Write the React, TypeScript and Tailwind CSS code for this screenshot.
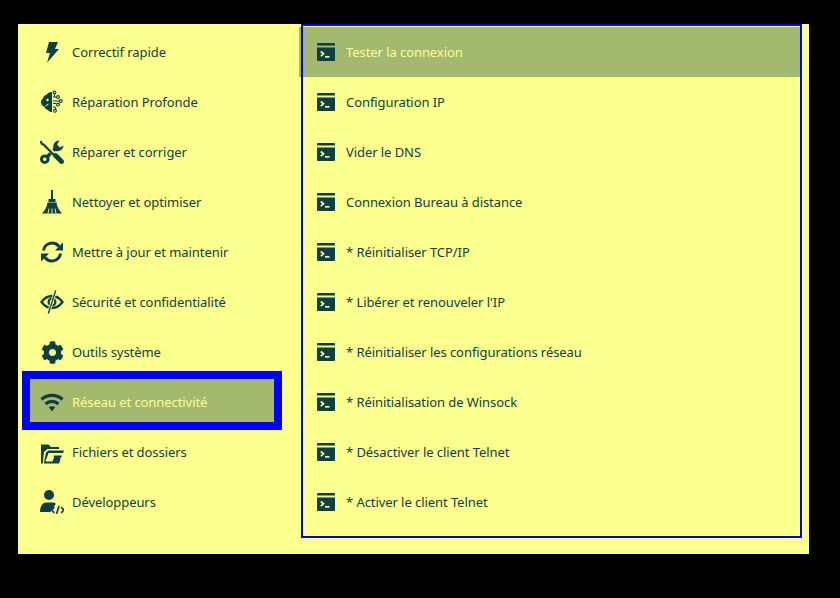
import type { ReactNode } from "react";
import { FaCog } from "react-icons/fa";

const BG = "#fbff8e";

function BoltIcon() {
  return (
    <svg width="24" height="24" viewBox="0 0 24 24" fill="currentColor">
      <path d="M9 2h9l-3 7h4L7 22.800 10 13H6z" />
    </svg>
  );
}

function BrainIcon() {
  return (
    <svg width="24" height="24" viewBox="0 0 24 24" fill="currentColor">
      <path d="M12 2v20c-1.900 0-3.300-.7-3.900-2.100-1.900 0-3.200-1.200-3.300-2.900C2.500 16.200 1 14.500 1 12.200c0-1.800.8-3.200 2.200-4 .1-1.800 1.400-3.200 3.200-3.300C7.200 3 9.500 2 12 2z" />
      <circle cx="7.500" cy="10" r="1.200" fill={BG} />
      <path d="M5.500 16l3-2" stroke={BG} strokeWidth="1" />
      <g fill="none" stroke="currentColor" strokeWidth="1.100">
        <path d="M13 7h3.500M13 11h6M13 13.500h3M13 17h2l1 2M14.500 3.500V7" />
        <circle cx="14.500" cy="2.500" r="1.400" />
        <circle cx="18" cy="7" r="1.400" />
        <circle cx="20.800" cy="11" r="1.400" />
        <circle cx="18" cy="14.500" r="1.400" />
        <circle cx="15" cy="20.800" r="1.400" />
      </g>
    </svg>
  );
}

function ToolsIcon() {
  return (
    <svg width="24" height="24" viewBox="0 0 24 24" fill="none" stroke="currentColor">
      <path d="M7 17L17 7" strokeWidth="3.600" />
      <circle cx="4.800" cy="19.200" r="3.300" strokeWidth="3" />
      <path d="M23.500 5.500a6 6 0 0 1-8.500 5.200 6 6 0 0 1 4.500-10.200L17 4.500l3 3z" fill="currentColor" stroke="none" />
      <path d="M1.500 1.500L15 15" stroke={BG} strokeWidth="4" />
      <path d="M0.500 1l1.500 3 1.500.5L15 16" strokeWidth="2.200" />
      <path d="M15.500 15.500l6 6" strokeWidth="4.800" strokeLinecap="round" />
    </svg>
  );
}

function BroomIcon() {
  return (
    <svg width="24" height="24" viewBox="0 0 24 24" fill="currentColor">
      <path d="M11 0h2v10h-2z" />
      <path d="M8.500 9h7v3h-7z" />
      <path d="M7.500 12.500h9c.4 3.500 2 7.500 5.500 11H2c3.500-3.500 5.100-7.500 5.500-11z" />
      <path d="M8 23.500l1-5M12 23.500v-5M16 23.500l-1-5" stroke={BG} strokeWidth="0.900" />
    </svg>
  );
}

function SyncIcon() {
  return (
    <svg width="24" height="24" viewBox="0 0 24 24" fill="currentColor">
      <path d="M3.500 10.500A8.700 8.700 0 0 1 19 6.500M20.500 13.500A8.700 8.700 0 0 1 5 17.500" fill="none" stroke="currentColor" strokeWidth="3" />
      <path d="M23 2.500v8h-8zM1 21.500v-8h8z" />
    </svg>
  );
}

function EyeCodeIcon() {
  return (
    <svg width="24" height="24" viewBox="0 0 24 24" fill="none" stroke="currentColor">
      <path d="M1.500 12C4.500 8 8 6 12 6s7.500 2 10.500 6c-3 4-6.500 6-10.500 6S4.500 16 1.500 12z" strokeWidth="2.300" />
      <circle cx="12" cy="12" r="3.400" strokeWidth="2.200" />
      <path d="M15.700 0.500L8.300 23.500" stroke={BG} strokeWidth="3" />
      <path d="M15.700 0.500L8.300 23.500" strokeWidth="1.300" />
    </svg>
  );
}

function WifiIcon() {
  return (
    <svg width="24" height="24" viewBox="0 0 24 24" fill="none" stroke="currentColor">
      <path d="M1.500 9.500C7 4 17 4 22.500 9.500M5.500 14c4-3.300 9-3.300 13 0" strokeWidth="3.400" />
      <path d="M8.800 17.200c2-1.200 4.400-1.200 6.400 0L12 21.500z" fill="currentColor" stroke="none" />
    </svg>
  );
}

function FolderIcon() {
  return (
    <svg width="24" height="24" viewBox="0 -2 24 24" fill="currentColor">
      <path d="M1 2.500h7.500l2.500 2.500h8v2H7.500L4 10 2.800 21.500H1z" />
      <path d="M8.500 8.500H24l-1 2.500H8.500L5.500 19.500h7l2-5h6.500l-1.800 7H3.800L6 10.500z" />
      <path d="M14 13.500h8l-.5 1.500h-8z" />
    </svg>
  );
}

function UserCodeIcon() {
  return (
    <svg width="24" height="24" viewBox="0 0 24 24" fill="currentColor">
      <circle cx="9" cy="5" r="5" />
      <path d="M0 22c0-5.500 2.500-9.500 6-9.500h6.500c1.500 0 2.500.4 3.300 1.200L10.500 22z" />
      <g fill="none" stroke="currentColor" strokeWidth="1.700">
        <path d="M14.300 17l-2.500 3 2.500 3M21.200 17l2.500 3-2.500 3M19 16l-2.500 8" />
      </g>
    </svg>
  );
}

// ligne du panneau de droite
function TerminalIcon() {
  return (
    <svg width="18" height="18" viewBox="0 0 18 18">
      <path d="M1 0h16a1 1 0 0 1 1 1v1.500H0V1a1 1 0 0 1 1-1z" fill="currentColor" />
      <path d="M0 4.500h18V17a1 1 0 0 1-1 1H1a1 1 0 0 1-1-1z" fill="currentColor" />
      <path d="M3.800 8.500l2.700 2.300-2.700 2.300" fill="none" stroke={BG} strokeWidth="1.700" />
      <path d="M8 13.800h4.500" stroke={BG} strokeWidth="1.700" />
    </svg>
  );
}

const categories: { label: string; icon: ReactNode; active?: boolean }[] = [
  { label: "Correctif rapide", icon: <BoltIcon /> },
  { label: "Réparation Profonde", icon: <BrainIcon /> },
  { label: "Réparer et corriger", icon: <ToolsIcon /> },
  { label: "Nettoyer et optimiser", icon: <BroomIcon /> },
  { label: "Mettre à jour et maintenir", icon: <SyncIcon /> },
  { label: "Sécurité et confidentialité", icon: <EyeCodeIcon /> },
  { label: "Outils système", icon: <FaCog size={23} /> },
  { label: "Réseau et connectivité", icon: <WifiIcon />, active: true },
  { label: "Fichiers et dossiers", icon: <FolderIcon /> },
  { label: "Développeurs", icon: <UserCodeIcon /> },
];

const actions = [
  "Tester la connexion",
  "Configuration IP",
  "Vider le DNS",
  "Connexion Bureau à distance",
  "* Réinitialiser TCP/IP",
  "* Libérer et renouveler l'IP",
  "* Réinitialiser les configurations réseau",
  "* Réinitialisation de Winsock",
  "* Désactiver le client Telnet",
  "* Activer le client Telnet",
];

export default function App() {
  return (
    <div className="h-[598px] w-[840px] overflow-hidden bg-black pl-[18px] pt-[24px] font-['Noto_Sans',sans-serif] text-[13px] leading-5 tracking-[-0.07px] text-[#0f3f45]">
      <div className="flex h-[530px] w-[791px] bg-[#fbff8e]">
        <ul className="w-[283px] shrink-0 pt-[3px]">
          {categories.map((item) => (
            <li key={item.label} className="relative flex h-[50px] items-center pl-[22px]">
              {item.active && (
                <span className="absolute left-[4px] top-[-6px] h-[59px] w-[260px] border-8 border-[#0000ff] bg-[#a3b96f]" />
              )}
              <span className="relative flex w-[24px] justify-center">{item.icon}</span>
              <span className={`relative ml-[8px] ${item.active ? "text-[#fbff8e]" : ""}`}>{item.label}</span>
            </li>
          ))}
        </ul>
        <ul className="relative h-[514px] w-[501px] pt-[3px] after:pointer-events-none after:absolute after:inset-0 after:border-2 after:border-[#0000ff]">
          {actions.map((action, i) => (
            <li
              key={action}
              className={`flex h-[50px] items-center ${i === 0 ? "ml-[-2px] w-[501px] bg-[#a3b96f] pl-[18px] text-[#fbff8e]" : "pl-[16px]"}`}
            >
              <span className="text-[#0f3f45]">
                <TerminalIcon />
              </span>
              <span className="ml-[11px]">{action}</span>
            </li>
          ))}
        </ul>
      </div>
    </div>
  );
}
